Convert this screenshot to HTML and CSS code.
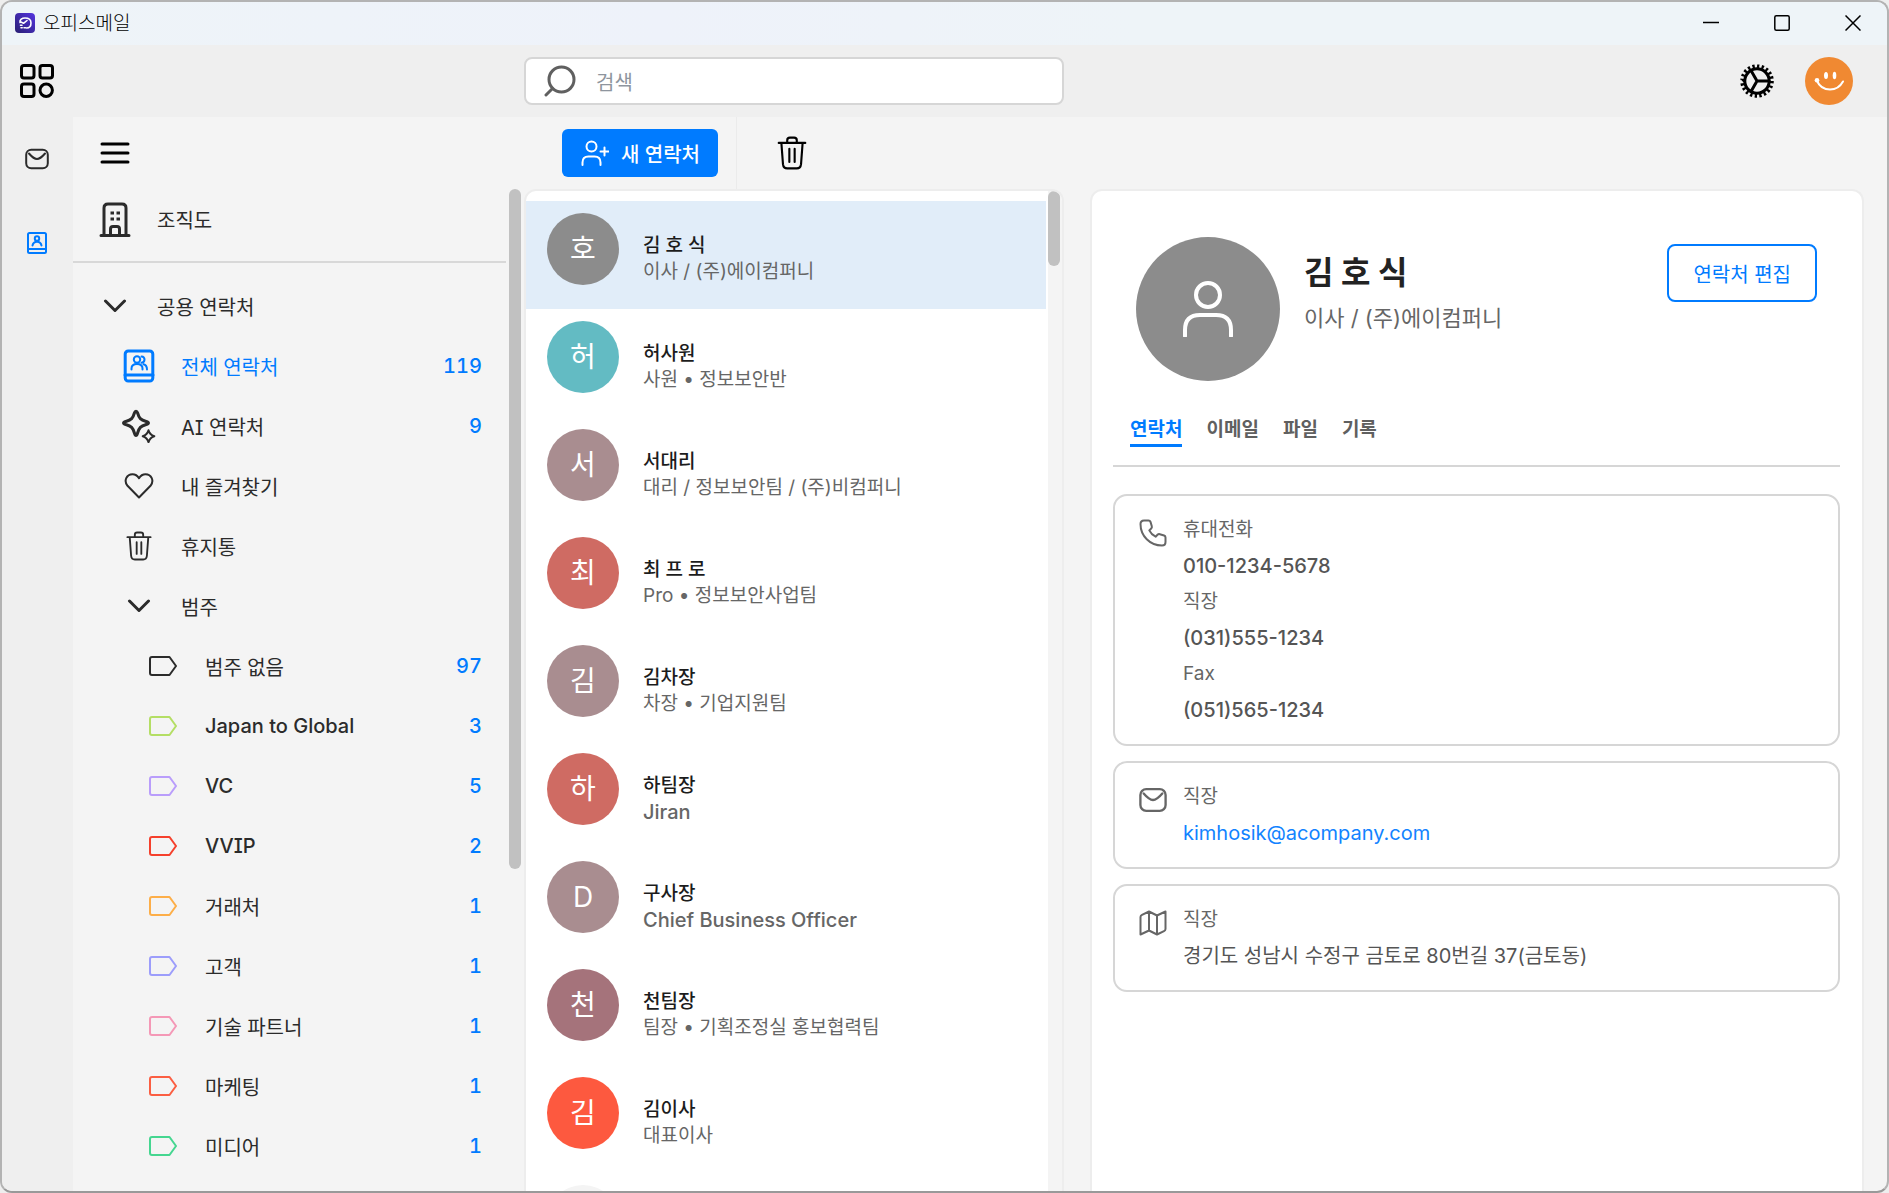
FILE: index.html
```html
<!DOCTYPE html>
<html lang="ko">
<head>
<meta charset="utf-8">
<title>오피스메일</title>
<link rel="stylesheet" href="styles.css">
</head>
<body>
<svg class="defs" aria-hidden="true">
  <symbol id="i-mail" viewBox="0 0 24 24"><rect x="1.2" y="2.7" width="21.6" height="18.6" rx="5"/><path d="M4 6.500c3 3.500 5.500 5.500 8 5.500s5-2 8-5.500"/></symbol>
  <symbol id="i-trash" viewBox="0 0 28 32"><path d="M1.500 6.500h25M9.500 6V4q0-2.500 2.500-2.500h4q2.500 0 2.500 2.500v2M4 6.500l1.500 20q.4 4 4 4h9q3.600 0 4-4l1.500-20M11.500 12v12.500M16.500 12v12.500"/></symbol>
  <symbol id="i-down" viewBox="0 0 24 14"><path d="M2.500 2L12 11.500L21.500 2"/></symbol>
  <symbol id="i-tag" viewBox="0 0 28 20"><path d="M3 1h17.500l6.500 9l-6.500 9H3q-2 0-2-2V3q0-2 2-2z"/></symbol>
</svg>
<div class="window">
  <header class="titlebar">
    <svg class="logo" viewBox="0 0 20 20" aria-hidden="true">
      <defs><linearGradient id="g" x1="0" y1="1" x2="1" y2="0"><stop offset="0" stop-color="#281f72"/><stop offset="1" stop-color="#5534e0"/></linearGradient></defs>
      <rect width="20" height="20" rx="4" fill="url(#g)"/>
      <path d="M5 9.500C4.500 6.500 7 5 10 5c4 0 6 2 6 5s-1.500 5-4.500 5M5 8.500l3.500 1.800L12 7.500M5.500 12.200h1.500M6 14.800h1.200M9 14.800h1.500" fill="none" stroke="#fff" stroke-width="1.600" stroke-linecap="round"/>
    </svg>
    <h1 class="app-name">오피스메일</h1>
    <div class="controls">
      <button aria-label="최소화"><svg viewBox="0 0 16 16"><path d="M0 7.500h16"/></svg></button>
      <button aria-label="최대화"><svg viewBox="0 0 16 16"><rect x=".8" y=".8" width="14.400" height="14.400" rx="1.500"/></svg></button>
      <button aria-label="닫기"><svg viewBox="0 0 16 16"><path d="M.5.5l15 15M15.500.5l-15 15"/></svg></button>
    </div>
  </header>

  <div class="topbar">
    <div class="topbar-left">
      <button class="apps" aria-label="앱"><svg viewBox="0 0 34 34"><rect x="1.500" y="1.500" width="12.500" height="12.500" rx="2.500"/><rect x="20" y="1.500" width="12.500" height="12.500" rx="2.500"/><rect x="1.500" y="20" width="12.500" height="12.500" rx="2.500"/><circle cx="26.200" cy="26.200" r="6.200"/></svg></button>
    </div>
    <label class="search">
      <svg viewBox="0 0 32 32" aria-hidden="true"><circle cx="17.500" cy="14.500" r="12.500"/><path d="M8.500 23.500L2 30"/></svg>
      <input type="search" placeholder="검색" aria-label="검색">
    </label>
    <div class="topbar-right">
      <button class="settings" aria-label="설정"><svg viewBox="0 0 34 34"><circle class="teeth" cx="17" cy="17" r="14.800" pathLength="40"/><circle class="ring" cx="17" cy="17" r="12.200"/><path class="spokes" d="M17 17h12M17 17L11 6.600M17 17l-6 10.400"/></svg></button>
      <button class="me" aria-label="내 프로필"><svg viewBox="0 0 48 48"><circle cx="24" cy="24" r="24" fill="#f08932"/><ellipse cx="21" cy="18.500" rx="2" ry="3.600" fill="#fff"/><ellipse cx="29.500" cy="18.500" rx="1.800" ry="3.800" fill="#fff"/><path d="M12 24c2.500 5.500 7.500 8.500 13 8.500 5.500 0 10-2.500 13-8" fill="none" stroke="#fff" stroke-width="2"/><circle cx="12" cy="23.300" r="2.300" fill="#fff"/></svg></button>
    </div>
  </div>

  <div class="body">
    <nav class="rail" aria-label="앱">
      <a href="#mail" aria-label="메일"><svg class="s24"><use href="#i-mail"/></svg></a>
      <a href="#contacts" class="on" aria-label="연락처"><svg class="s24" viewBox="0 0 24 24"><rect x="3" y="2" width="18" height="20" rx="1.500"/><path d="M3 18h18"/><circle cx="12" cy="7.500" r="2.200"/><path d="M7.500 14.500c.5-2.500 2-3.800 4.500-3.800s4 1.300 4.500 3.800"/></svg></a>
    </nav>

    <aside class="sidebar">
      <div class="menu-bar"><button aria-label="메뉴"><svg class="menu" viewBox="0 0 30 24"><path d="M2 3h26M2 12h26M2 21h26"/></svg></button></div>
      <div class="side-scroll">
        <nav class="side-nav" aria-label="연락처 목록">
          <a class="org" href="#org"><span class="ico"><svg class="building" viewBox="0 0 32 36"><path d="M5 33V6q0-4 4-4h14q4 0 4 4v27M2 33.500h28"/><path d="M11.500 33v-6q0-2.500 2.500-2.500h4q2.500 0 2.500 2.500v6"/><path class="win" d="M11.500 11h3.500M17.500 11h3.500M11.500 17h3.500M17.500 17h3.500"/></svg></span>조직도</a>
          <ul>
            <li><a class="lv1" href="#shared"><span class="ico"><svg class="down"><use href="#i-down"/></svg></span>공용 연락처</a></li>
            <li><a class="lv2 on" href="#all"><span class="ico"><svg class="book" viewBox="0 0 32 34"><rect x="2.200" y="2" width="27.600" height="30" rx="3"/><path d="M2 26h28"/><g class="thin"><circle cx="14" cy="10.500" r="3.200"/><path d="M8.500 20.500v-1q0-4.500 5.500-4.500t5.500 4.500v1M18.500 7.500c4 .3 4 5.800 0 6.200M20.500 15.200c2.500.6 3.500 2 3.500 5.300"/></g></svg></span>전체 연락처<b>119</b></a></li>
            <li><a class="lv2" href="#ai"><span class="ico"><svg class="spark" viewBox="0 0 34 34"><path d="M14 2.200q1 0 1.500 1.600c1.700 5.700 3 7 8.700 8.700 3 .9 3 2.100 0 3-5.700 1.700-7 3-8.700 8.700-.9 3-2.100 3-3 0-1.700-5.700-3-7-8.700-8.700-3-.9-3-2.100 0-3 5.700-1.700 7-3 8.700-8.700q.5-1.600 1.500-1.600z"/><path class="thin" d="M26.500 21.200q1.200 4.500 5.800 6-4.600 1.500-5.800 6-1.200-4.500-5.800-6 4.600-1.500 5.800-6z"/></svg></span>AI 연락처<b>9</b></a></li>
            <li><a class="lv2" href="#fav"><span class="ico"><svg class="heart" viewBox="0 0 30 26"><path d="M15 24.500L3.500 12.800C-.5 8 2.500 1.200 8.500 1.200c3 0 5 1.500 6.500 4 1.500-2.500 3.500-4 6.500-4 6 0 9 6.800 5 11.600z"/></svg></span>내 즐겨찾기</a></li>
            <li><a class="lv2" href="#trash"><span class="ico"><svg class="bin"><use href="#i-trash"/></svg></span>휴지통</a></li>
            <li><a class="lv2" href="#cat"><span class="ico"><svg class="down"><use href="#i-down"/></svg></span>범주</a></li>
            <li><a class="lv3" href="#c0"><span class="ico"><svg class="tag dark"><use href="#i-tag"/></svg></span>범주 없음<b>97</b></a></li>
            <li><a class="lv3" href="#c1"><span class="ico"><svg class="tag lime"><use href="#i-tag"/></svg></span><span class="latin" lang="en">Japan to Global</span><b>3</b></a></li>
            <li><a class="lv3" href="#c2"><span class="ico"><svg class="tag violet"><use href="#i-tag"/></svg></span><span class="latin" lang="en">VC</span><b>5</b></a></li>
            <li><a class="lv3" href="#c3"><span class="ico"><svg class="tag red"><use href="#i-tag"/></svg></span><span class="latin" lang="en">VVIP</span><b>2</b></a></li>
            <li><a class="lv3" href="#c4"><span class="ico"><svg class="tag amber"><use href="#i-tag"/></svg></span>거래처<b>1</b></a></li>
            <li><a class="lv3" href="#c5"><span class="ico"><svg class="tag indigo"><use href="#i-tag"/></svg></span>고객<b>1</b></a></li>
            <li><a class="lv3" href="#c6"><span class="ico"><svg class="tag pink"><use href="#i-tag"/></svg></span>기술 파트너<b>1</b></a></li>
            <li><a class="lv3" href="#c7"><span class="ico"><svg class="tag coral"><use href="#i-tag"/></svg></span>마케팅<b>1</b></a></li>
            <li><a class="lv3" href="#c8"><span class="ico"><svg class="tag green"><use href="#i-tag"/></svg></span>미디어<b>1</b></a></li>
          </ul>
        </nav>
        <div class="track"><div class="thumb side-thumb"></div></div>
      </div>
    </aside>

    <main class="content">
      <div class="toolbar">
        <button class="new"><svg viewBox="0 0 28 26" aria-hidden="true"><circle cx="10.500" cy="6.500" r="5"/><path d="M1.500 25v-2.500q0-6 6-6h6q6 0 6 6V25M23.500 7.500v8M19.500 11.500h8"/></svg>새 연락처</button>
        <span class="sep"></span>
        <button class="delete" aria-label="삭제"><svg><use href="#i-trash"/></svg></button>
      </div>
      <div class="panels">
        <section class="list" aria-label="연락처">
          <ul>
            <li class="on"><span class="avatar gray">호</span><div><strong>김 호 식</strong><span>이사 / (주)에이컴퍼니</span></div></li>
            <li><span class="avatar teal">허</span><div><strong>허사원</strong><span>사원 • 정보보안반</span></div></li>
            <li><span class="avatar mauve">서</span><div><strong>서대리</strong><span>대리 / 정보보안팀 / (주)비컴퍼니</span></div></li>
            <li><span class="avatar brick">최</span><div><strong>최 프 로</strong><span>Pro • 정보보안사업팀</span></div></li>
            <li><span class="avatar mauve">김</span><div><strong>김차장</strong><span>차장 • 기업지원팀</span></div></li>
            <li><span class="avatar brick">하</span><div><strong>하팀장</strong><span class="latin" lang="en">Jiran</span></div></li>
            <li><span class="avatar mauve">D</span><div><strong>구사장</strong><span class="latin" lang="en">Chief Business Officer</span></div></li>
            <li><span class="avatar plum">천</span><div><strong>천팀장</strong><span>팀장 • 기획조정실 홍보협력팀</span></div></li>
            <li><span class="avatar flame">김</span><div><strong>김이사</strong><span>대표이사</span></div></li>
            <li><span class="avatar pale"></span></li>
          </ul>
          <div class="track list-track"><div class="thumb list-thumb"></div></div>
        </section>

        <section class="detail" aria-label="연락처 정보">
          <div class="profile">
            <span class="portrait"><svg viewBox="0 0 52 56"><circle cx="26" cy="14" r="12"/><path d="M3 55v-6q0-15 15-15h16q15 0 15 15v6"/></svg></span>
            <div class="who"><h2>김 호 식</h2><p>이사 / (주)에이컴퍼니</p></div>
            <button class="edit">연락처 편집</button>
          </div>
          <nav class="tabs" aria-label="상세"><a class="on" href="#t1">연락처</a><a href="#t2">이메일</a><a href="#t3">파일</a><a href="#t4">기록</a></nav>
          <div class="cards">
            <article class="card">
              <svg viewBox="0 0 28 28"><path d="M5 1.500h4.500q1.500 0 2 1.400l1.300 4.300q.4 1.300-.6 2.300l-1.900 1.900c1.300 2.700 3.600 5 6.300 6.300l1.900-1.900q1-1 2.300-.6l4.300 1.300q1.400.5 1.400 2V23q0 3.500-3.500 3.500C11 26.500 1.500 17 1.500 5q0-3.500 3.500-3.500z"/></svg>
              <dl><dt>휴대전화</dt><dd class="latin">010-1234-5678</dd><dt>직장</dt><dd class="latin">(031)555-1234</dd><dt>Fax</dt><dd class="latin">(051)565-1234</dd></dl>
            </article>
            <article class="card">
              <svg><use href="#i-mail"/></svg>
              <dl><dt>직장</dt><dd><a href="mailto:kimhosik@acompany.com">kimhosik@acompany.com</a></dd></dl>
            </article>
            <article class="card">
              <svg viewBox="0 0 28 28"><path d="M10 2.500L3 5.800q-1.500.7-1.500 2.200V25.500L10 21.500l8 4 7-3.300q1.500-.7 1.500-2.200V2.500L18 6.500zM10 2.500v19M18 6.500v19"/></svg>
              <dl><dt>직장</dt><dd>경기도 성남시 수정구 금토로 80번길 37(금토동)</dd></dl>
            </article>
          </div>
        </section>
      </div>
    </main>
  </div>
</div>
</body>
</html>
```

FILE: styles.css
```css
:root {
  --blue: #007bff;
  --ink: #2b2b2b;
  --gray: #666;
}

* { box-sizing: border-box; }

body {
  margin: 0;
  background: #eee;
  color: var(--ink);
  font-family: Inter, "Noto Sans CJK KR", sans-serif;
  font-size: 20px;
}

button {
  display: block;
  padding: 0;
  border: 0;
  background: none;
  color: inherit;
  font: inherit;
}

a { color: inherit; text-decoration: none; }
ul, dl, dd, h1, h2, p { margin: 0; padding: 0; }
ul { list-style: none; }

svg {
  display: block;
  flex: none;
  fill: none;
  stroke: currentColor;
  stroke-width: 2;
  stroke-linecap: round;
  stroke-linejoin: round;
}

.defs { position: absolute; width: 0; height: 0; }

.window {
  display: flex;
  flex-direction: column;
  height: 100vh;
  overflow: hidden;
  border: 2px solid #b3b3b3;
  border-bottom-color: #999;
  border-radius: 12px;
  background: #f4f4f4;
}

/* Title bar */
.titlebar {
  display: flex;
  flex: none;
  align-items: center;
  gap: 8px;
  height: 43px;
  padding: 0 26px 2px 13px;
  background: linear-gradient(90deg, #eef4f8, #eef2fa 35%, #eef4f8 60%);
  color: #000;
}

.logo { width: 20px; height: 20px; stroke: none; }
.app-name { flex: 1; padding-top: 2px; font-size: 19px; font-weight: 300; line-height: 28px; }
.controls { display: flex; gap: 55px; }
.controls svg { width: 16px; height: 16px; stroke-width: 1.5; stroke-linecap: butt; }

/* Search bar */
.topbar {
  display: grid;
  flex: none;
  grid-template-columns: 522px minmax(0, 540fr) minmax(0, 800fr);
  align-items: center;
  height: 72px;
  padding-right: 23px;
  background: #efefef;
  color: #000;
}

.topbar-left { padding-left: 18px; }
.apps svg { width: 34px; height: 34px; stroke-width: 3; }

.search {
  display: flex;
  align-items: center;
  gap: 20px;
  height: 48px;
  padding: 0 18px;
  border: 2px solid #d6d6d6;
  border-radius: 8px;
  background: #fff;
  color: #606060;
}

.search svg { width: 32px; height: 32px; stroke-width: 3; }
.search input {
  flex: 1;
  min-width: 0;
  padding: 3px 0 0;
  border: 0;
  outline: 0;
  background: none;
  font: inherit;
}
.search input::placeholder { color: #8e959e; }

.topbar-right {
  display: flex;
  align-items: center;
  justify-content: flex-end;
  gap: 31px;
  padding-right: 11px;
}

.settings svg { width: 34px; height: 34px; }
.settings .teeth { stroke-width: 4; stroke-dasharray: 1 1; stroke-linecap: butt; }
.settings .ring { stroke-width: 3; }
.settings .spokes { stroke-width: 3; }
.me svg { width: 48px; height: 48px; stroke: none; }

.body { display: flex; flex: 1; min-height: 0; }

/* App rail */
.rail {
  display: flex;
  flex: none;
  flex-direction: column;
  align-items: center;
  gap: 60px;
  width: 71px;
  padding: 30px 2px 0 0;
  background: #efefef;
}
.rail .on { color: var(--blue); }
.s24 { width: 24px; height: 24px; }

/* Sidebar */
.sidebar {
  display: flex;
  flex: none;
  flex-direction: column;
  width: 451px;
}

.menu-bar {
  display: flex;
  flex: none;
  align-items: center;
  height: 72px;
  padding-left: 27px;
  color: #000;
}
.menu { width: 30px; height: 24px; stroke-width: 3; }

.side-scroll { display: flex; flex: 1; gap: 3px; min-height: 0; }
.side-nav {
  flex: 1;
  overflow: hidden;
  font-feature-settings: "cv08", "tnum";
}
.side-nav a {
  display: flex;
  align-items: center;
  height: 60px;
  padding-right: 24px;
}
.side-nav ul { padding-top: 13px; }
.side-nav .ico {
  display: flex;
  flex: none;
  justify-content: center;
  width: 36px;
  margin-right: 24px;
}
.side-nav .org {
  height: 74px;
  padding: 0 0 11px 24px;
  border-bottom: 2px solid #d8d8d8;
}
.side-nav .lv1 { padding-left: 24px; }
.side-nav .lv2 { padding-left: 48px; }
.side-nav .lv3 { padding-left: 72px; }
.side-nav .on { color: var(--blue); }
.side-nav b { margin-left: auto; color: var(--blue); font-weight: 500; }

.building { width: 32px; height: 36px; stroke-width: 3; }
.building .win { stroke-width: 3; stroke-linecap: butt; }
.down { width: 24px; height: 14px; stroke-width: 3; }
.book { width: 32px; height: 34px; stroke-width: 3; }
.spark { width: 34px; height: 34px; stroke-width: 3; }
.book .thin, .spark .thin { stroke-width: 2; }
.heart { width: 30px; height: 26px; }
.bin { width: 26px; height: 30px; }
.tag { width: 28px; height: 20px; }

.dark { color: #2b2b2b; }
.lime { color: #b4de64; }
.violet { color: #b99dfb; }
.red { color: #f5402c; }
.amber { color: #fdae48; }
.indigo { color: #9c9dfb; }
.pink { color: #f498b6; }
.coral { color: #fb5e42; }
.green { color: #45d690; }

.latin { font-size: 20px; font-weight: 500; }

.track { flex: none; width: 12px; margin-right: 3px; }
.thumb { border-radius: 6px; background: #c1c1c1; }
.side-thumb { height: 680px; }

/* Content */
.content {
  display: flex;
  flex: 1;
  flex-direction: column;
  min-width: 0;
  padding-right: 23px;
}

.toolbar {
  display: flex;
  flex: none;
  align-items: center;
  height: 72px;
  padding-left: 38px;
}
.new {
  display: flex;
  align-items: center;
  gap: 12px;
  height: 48px;
  padding: 0 18px 0 19px;
  border-radius: 6px;
  background: var(--blue);
  color: #fff;
  font-weight: 500;
}
.new svg { width: 28px; height: 26px; }
.sep { align-self: stretch; width: 1px; margin: 0 40px 0 18px; background: #ebebeb; }
.delete { color: #000; }
.delete svg { width: 30px; height: 34px; }

.panels {
  display: grid;
  flex: 1;
  grid-template-columns: minmax(0, 540fr) minmax(0, 774fr);
  grid-template-rows: minmax(0, 1fr);
  gap: 26px;
  min-height: 0;
}

.list, .detail {
  border: 2px solid #ededed;
  border-bottom: 0;
  border-radius: 12px 12px 0 0;
  background: #fff;
  overflow: hidden;
}

.list { display: flex; }
.list ul { flex: 1; min-width: 0; padding: 10px 2px 0 0; overflow: hidden; }
.list li {
  display: flex;
  gap: 24px;
  height: 108px;
  padding: 12px 21px;
}
.list li.on { background: #e1edf9; }
.list li div { display: flex; flex-direction: column; padding-top: 20px; }
.list strong { color: #1c1c1c; font-size: 19px; font-weight: 500; line-height: 26px; }
.list li div span { color: var(--gray); font-size: 19px; line-height: 26px; }
.list li div .latin { font-size: 20px; }

.list-track { width: 14px; margin: 0; padding-right: 2px; background: #f4f4f4; }
.list-thumb { height: 75px; }

.avatar {
  display: flex;
  flex: none;
  align-items: center;
  justify-content: center;
  width: 72px;
  height: 72px;
  border-radius: 50%;
  color: #fff;
  font-size: 28px;
  line-height: 40px;
}
.gray { background: #8c8c8c; }
.teal { background: #63bbc3; }
.mauve { background: #a98d90; }
.brick { background: #cf6b63; }
.plum { background: #a5737b; }
.flame { background: #fd593f; }
.pale { background: #f4f4f4; }

/* Contact details */
.detail { padding: 46px 22px 0 21px; }

.profile { display: flex; align-items: flex-start; gap: 24px; padding: 0 23px; }
.portrait {
  display: flex;
  flex: none;
  align-items: center;
  justify-content: center;
  width: 144px;
  height: 144px;
  border-radius: 50%;
  background: #8c8c8c;
  color: #fff;
}
.portrait svg { width: 52px; height: 56px; stroke-width: 4; }
.who { flex: 1; padding-top: 12px; }
.who h2 { color: #222; font-size: 32px; font-weight: 700; line-height: 48px; }
.who p { color: var(--gray); font-size: 22px; line-height: 42px; }
.edit {
  height: 58px;
  margin-top: 7px;
  padding: 0 24px;
  border: 2px solid var(--blue);
  border-radius: 8px;
  color: var(--blue);
}

.tabs {
  display: flex;
  gap: 24px;
  margin-top: 35px;
  padding: 0 17px 18px;
  border-bottom: 2px solid #d6d6d6;
  color: #606060;
  font-size: 19px;
  font-weight: 700;
  line-height: 28px;
}
.tabs a { border-bottom: 3px solid transparent; }
.tabs .on { border-color: var(--blue); color: var(--blue); }

.cards { display: flex; flex-direction: column; gap: 15px; padding-top: 27px; }
.card {
  display: flex;
  gap: 16px;
  padding: 16px 24px;
  border: 2px solid #d6d6d6;
  border-radius: 14px;
  color: var(--gray);
}
.card svg { width: 28px; height: 28px; margin-top: 7px; }
.card dl { line-height: 36px; }
.card dt { font-size: 19px; }
.card dd { color: #555; }
.card dd a { color: #1283ff; }
```
